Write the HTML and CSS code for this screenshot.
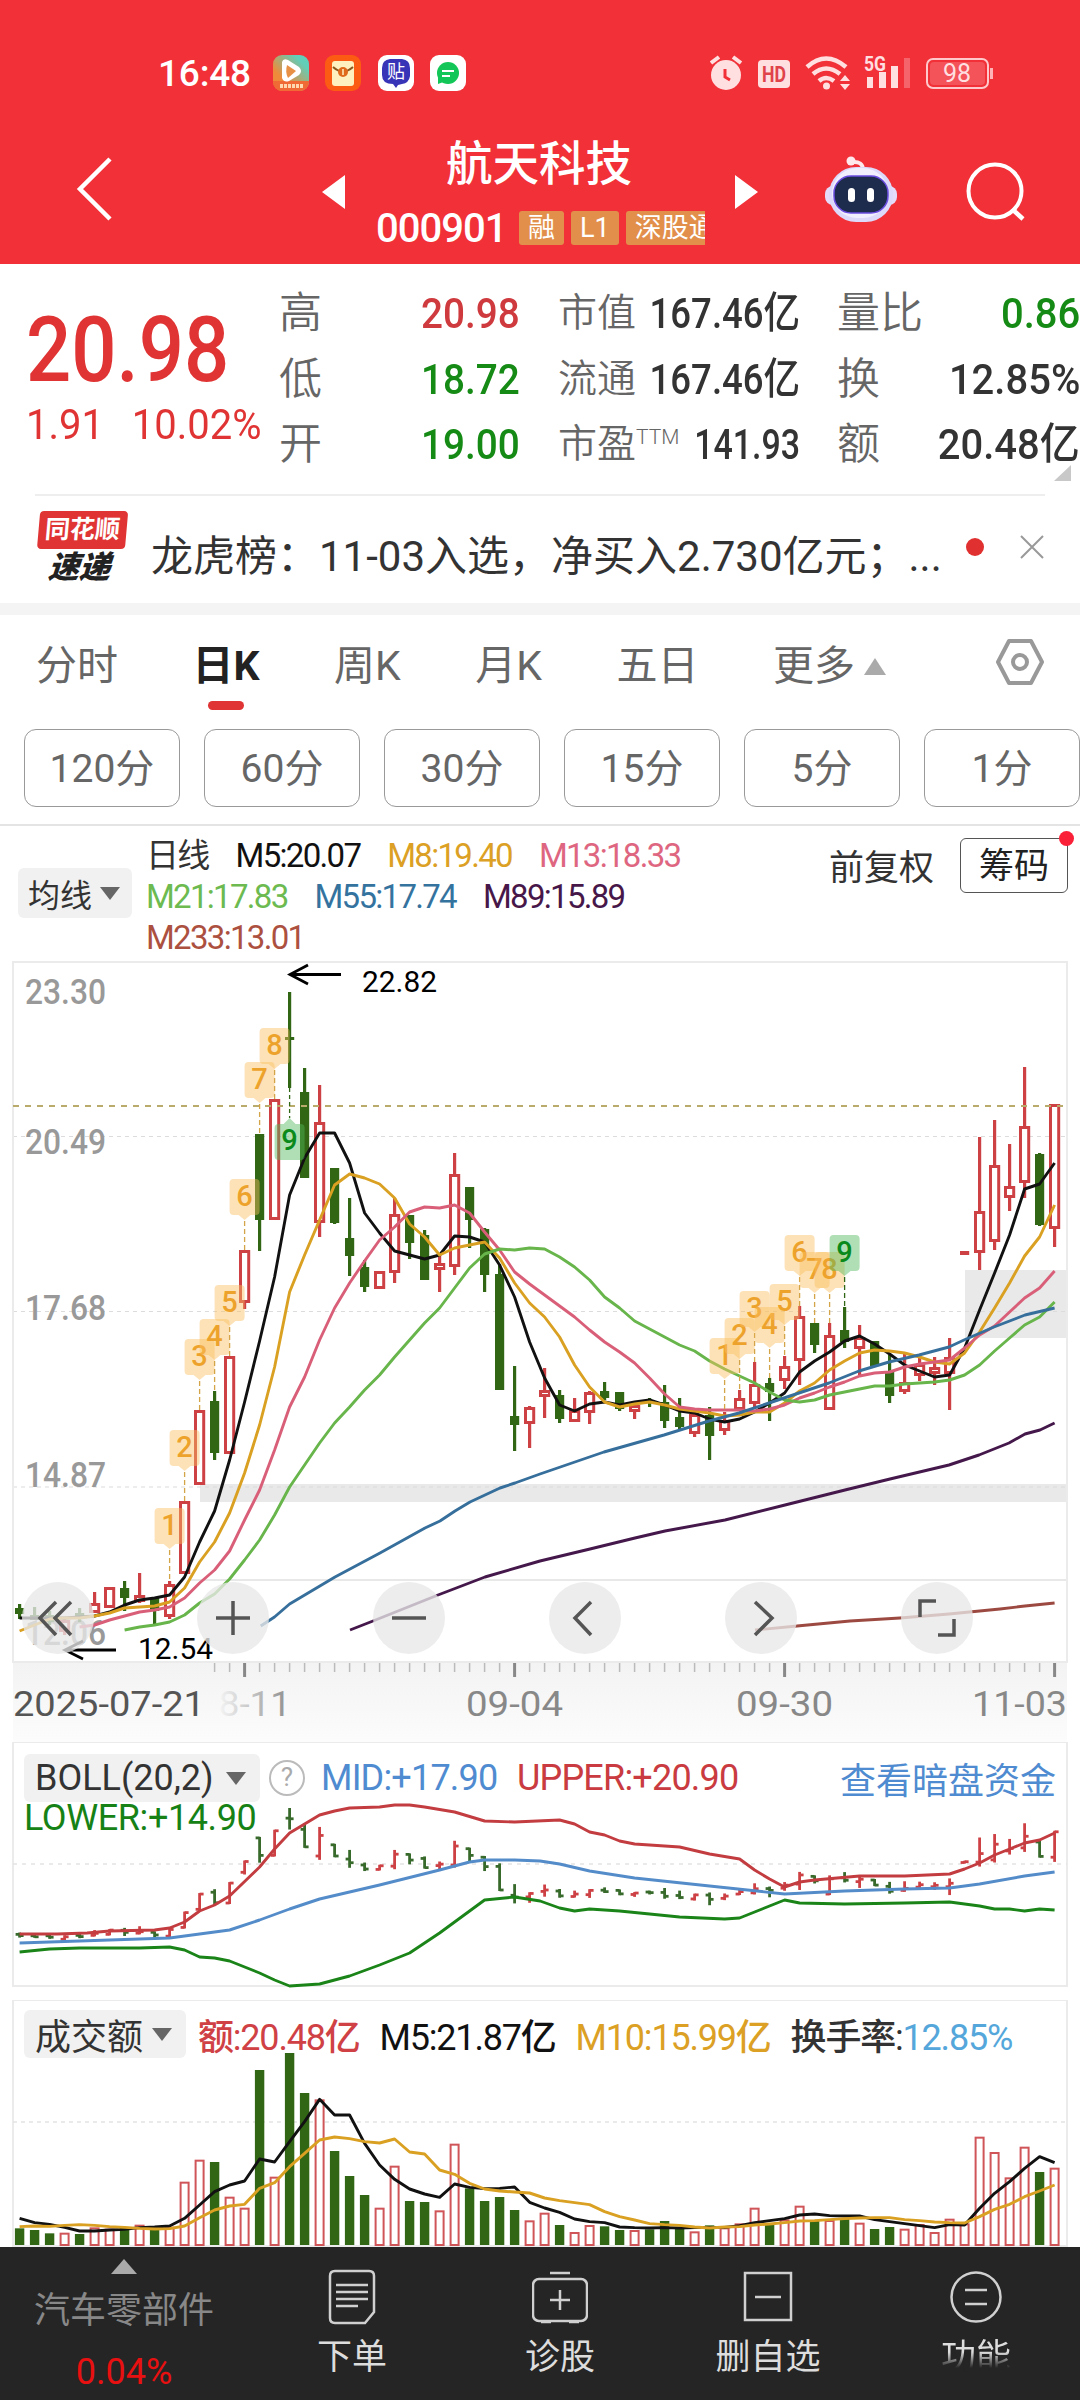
FILE: index.html
```html
<!DOCTYPE html>
<html lang="zh-CN">
<head>
    <meta charset="UTF-8">
    <title>航天科技 000901</title>
    <link rel="stylesheet" href="styles.css">
</head>
<body>
<header class="top">
    <div class="status">
        <span class="clock">16:48</span>
        <svg class="app" viewBox="0 0 36 36">
            <defs><linearGradient id="g1" x1="0" y1="1" x2="1" y2="0"><stop offset="0.3" stop-color="#ee8a3a"/><stop offset="0.8" stop-color="#62cdb8"/></linearGradient></defs>
            <rect width="36" height="36" rx="9" fill="url(#g1)"/>
            <path d="M0 26h36v1a9 9 0 0 1-9 9H9a9 9 0 0 1-9-9z" fill="#ef6a35"/>
            <path d="M9 7q1-4 6-2l11 7q4 4 0 8l-10 6q-5 2-7-3z" fill="#fff"/>
            <path d="M14 10l9 6-8 7q-3-6-1-13z" fill="#e89045"/>
            <path d="M7 31h23" stroke="#ffd9b0" stroke-width="4" stroke-dasharray="3 1"/>
        </svg>
        <svg class="app" viewBox="0 0 36 36">
            <rect width="36" height="36" rx="9" fill="#fb5b12"/>
            <rect x="7" y="6" width="22" height="25" rx="3" fill="#fff0c0"/>
            <path d="M8 12q10 9 20 0" fill="none" stroke="#8a5a20" stroke-width="2"/>
            <circle cx="18" cy="17" r="5" fill="#e06a1c"/><path d="M18 14v6" stroke="#fff0c0" stroke-width="1.5"/>
        </svg>
        <svg class="app" viewBox="0 0 36 36">
            <rect width="36" height="36" rx="9" fill="#fff"/>
            <path d="M12 4h12q8 1 8 9v8q-1 7-8 8l-4 1-2 3-3-4q-11 0-11-9v-7q0-8 8-9z" fill="#3834b8"/>
            <text x="18" y="23" text-anchor="middle" font-size="18" fill="#fff">贴</text>
        </svg>
        <svg class="app" viewBox="0 0 36 36">
            <rect width="36" height="36" rx="9" fill="#fff"/>
            <circle cx="18" cy="18" r="11" fill="#12c657"/><path d="M8 20v9l8-3z" fill="#12c657"/>
            <path d="M12 16h12M12 21h8" stroke="#fff" stroke-width="2"/>
        </svg>
        <svg class="status-icons" viewBox="710 50 290 45">
            <g fill="#ffdfe0">
                <circle cx="726" cy="74" r="15"/>
                <path d="M711 62l8-6M741 62l-8-6" stroke="#ffdfe0" stroke-width="4"/>
                <path d="M725 68v8l5 3" fill="none" stroke="#f13038" stroke-width="3"/>
                <rect x="758" y="59" width="32" height="28" rx="4"/>
                <text x="774" y="81" text-anchor="middle" font-size="22" font-weight="bold" fill="#e0434a" textLength="24" lengthAdjust="spacingAndGlyphs">HD</text>
                <g fill="none" stroke="#ffdfe0" stroke-width="4.5">
                    <path d="M807 66q19-17 39 0M813 73q13-11 27 0M819 80q7-6 15 0"/>
                </g>
                <circle cx="826.500" cy="85" r="3.500"/>
                <path d="M840 80h10l-5-6zM840 83h10l-5 6z"/>
                <text x="864" y="70" font-size="20" font-weight="bold" textLength="22" lengthAdjust="spacingAndGlyphs">5G</text>
                <path d="M867 76h6v11h-6zM879 71h7v16h-7zM891 65h7v22h-7z"/>
                <path d="M904 57h6v30h-6z" opacity="0.3"/>
                <rect x="927" y="58" width="61" height="29" rx="6" fill="none" stroke="#ffc9cb" stroke-width="2"/>
                <rect x="930" y="61" width="55" height="23" rx="4" opacity="0.2"/>
                <path d="M990 67h3v11h-3z" fill="#ffb3b6"/>
                <text x="957" y="81" text-anchor="middle" font-size="25">98</text>
            </g>
        </svg>
    </div>
    <div class="nav">
        <svg class="back" viewBox="0 0 38 66"><path d="M34 3L4 33l30 30" fill="none" stroke="#fff" stroke-width="4.500"/></svg>
        <svg class="prev" viewBox="0 0 23 34"><path d="M23 0v34L0 17z" fill="#fff"/></svg>
        <div class="stock">
            <h1>航天科技</h1>
            <div class="code-row"><span class="code">000901</span><span class="badge">融</span><span class="badge">L1</span><span class="badge">深股通</span></div>
        </div>
        <svg class="next" viewBox="0 0 23 34"><path d="M0 0v34l23-17z" fill="#fff"/></svg>
        <svg class="robot" viewBox="0 0 72 67">
            <path d="M38 14q0-9-11-8" fill="none" stroke="#ffe9ec" stroke-width="4"/>
            <circle cx="26" cy="5" r="4.500" fill="#ffe9ec"/>
            <rect x="0" y="30" width="72" height="19" rx="8" fill="#e5dcfa"/>
            <rect x="4" y="11" width="64" height="55" rx="27" fill="#dcd9fb"/>
            <rect x="7" y="12" width="56" height="50" rx="25" fill="#f1eefe"/>
            <rect x="9" y="20" width="54" height="37" rx="17" fill="#1d2b4d" stroke="#6a4de0" stroke-width="1.500"/>
            <rect x="23" y="32" width="7" height="14" rx="3.500" fill="#fff"/>
            <rect x="42" y="32" width="7" height="14" rx="3.500" fill="#fff"/>
        </svg>
        <svg class="search" viewBox="0 0 62 62"><circle cx="30" cy="30" r="26.500" fill="none" stroke="#fff" stroke-width="4"/><path d="M47 48l11 10" stroke="#fff" stroke-width="4.500"/></svg>
    </div>
</header>

<section class="quote">
    <div class="price">
        <div class="last">20.98</div>
        <div class="change"><span>1.91</span><span>10.02%</span></div>
    </div>
    <dl class="col col-a">
        <dt>高</dt><dd class="up">20.98</dd>
        <dt>低</dt><dd class="down">18.72</dd>
        <dt>开</dt><dd class="down">19.00</dd>
    </dl>
    <dl class="col col-b">
        <dt>市值</dt><dd>167.46亿</dd>
        <dt>流通</dt><dd>167.46亿</dd>
        <dt>市盈<sup>TTM</sup></dt><dd class="pe">141.93</dd>
    </dl>
    <dl class="col col-c">
        <dt>量比</dt><dd class="down">0.86</dd>
        <dt>换</dt><dd>12.85%</dd>
        <dt>额</dt><dd>20.48亿</dd>
    </dl>
    <i class="corner"></i>
</section>

<section class="news">
    <div class="news-logo"><b>同花顺</b><em>速递</em></div>
    <p>龙虎榜：11-03入选，净买入2.730亿元；...</p>
    <i class="dot"></i>
    <svg class="close" viewBox="0 0 24 24"><path d="M1 1l22 22M23 1L1 23" stroke="#999" stroke-width="2"/></svg>
</section>

<nav class="tabs">
    <span>分时</span><span class="active">日K</span><span>周K</span><span>月K</span><span>五日</span><span class="more">更多</span>
    <svg class="hex" viewBox="0 0 50 48"><path d="M14 3h22l11 21-11 21H14L3 24z" fill="none" stroke="#999" stroke-width="4" stroke-linejoin="round"/><circle cx="25" cy="24" r="7" fill="none" stroke="#999" stroke-width="4"/></svg>
</nav>
<div class="minutes">
    <span>120分</span><span>60分</span><span>30分</span><span>15分</span><span>5分</span><span>1分</span>
</div>

<section class="ma">
    <span class="select ma-select">均线</span>
    <div class="ma-rows">
        <div><span class="kind">日线</span><span class="m5">M5:20.07</span><span class="m8">M8:19.40</span><span class="m13">M13:18.33</span></div>
        <div><span class="m21">M21:17.83</span><span class="m55">M55:17.74</span><span class="m89">M89:15.89</span></div>
        <div><span class="m233">M233:13.01</span></div>
    </div>
    <span class="fq">前复权</span>
    <span class="chips">筹码</span>
</section>

<svg id="kline" width="1080" height="782" viewBox="0 960 1080 782"></svg>

<section class="panel">
    <svg id="boll" width="1080" height="258" viewBox="0 1742 1080 258"></svg>
    <div class="legend">
        <span class="select">BOLL(20,2)</span>
        <span class="help">?</span>
        <span class="mid">MID:+17.90</span>
        <span class="upper">UPPER:+20.90</span>
        <span class="link">查看暗盘资金</span>
    </div>
    <div class="lower">LOWER:+14.90</div>
</section>

<section class="panel">
    <svg id="volume" width="1080" height="247" viewBox="0 2000 1080 247"></svg>
    <div class="legend vol-legend">
        <span class="select">成交额</span>
        <span class="amount">额:20.48亿</span>
        <span class="m5">M5:21.87亿</span>
        <span class="m8">M10:15.99亿</span>
        <span>换手率:<b>12.85%</b></span>
    </div>
</section>

<footer class="bottom">
    <div class="sector"><i></i><span>汽车零部件</span><b>0.04%</b></div>
    <div class="item">
        <svg viewBox="0 0 56 56"><path d="M11 2h34q5 0 5 5v36l-9 11H11q-5 0-5-5V7q0-5 5-5z"/><path d="M12 16h32M12 23h32M12 30h32M12 37h22"/></svg>
        <span>下单</span>
    </div>
    <div class="item">
        <svg viewBox="0 0 56 56"><rect x="1" y="10" width="54" height="42" rx="6"/><path d="M18 4h20M28 21v20M18 31h20M9 53h10M37 53h10"/></svg>
        <span>诊股</span>
    </div>
    <div class="item">
        <svg viewBox="0 0 56 56"><rect x="5" y="4" width="46" height="47"/><path d="M15 28h26"/></svg>
        <span>删自选</span>
    </div>
    <div class="item last-item">
        <svg viewBox="0 0 56 56"><circle cx="28" cy="28" r="24.500"/><path d="M17 21h22M17 35h22"/></svg>
        <span>功能</span>
    </div>
</footer>

<script src="chart.js"></script>
</body>
</html>
```
FILE: styles.css
```css
* {
    box-sizing: border-box;
}

body {
    margin: 0;
    width: 1080px;
    height: 2400px;
    overflow: hidden;
    background: #fff;
    color: #333;
    font-family: Roboto, "Noto Sans CJK SC", sans-serif;
}

svg {
    display: block;
    flex: none;
}

span, dt, dd, p {
    white-space: nowrap;
}

/* red header */
.top {
    height: 264px;
    background: #f13038;
    color: #fff;
}

.status {
    display: flex;
    align-items: center;
    height: 126px;
    padding: 20px 0 0 158px;
}

.clock {
    width: 115px;
    font-size: 37px;
    font-weight: 500;
    letter-spacing: -0.2px;
}

.app {
    width: 36px;
    height: 36px;
    margin-right: 16.400px;
}

.status-icons {
    width: 290px;
    height: 45px;
    margin-left: 227px;
}

.nav {
    display: flex;
    height: 138px;
}

.back {
    width: 38px;
    height: 66px;
    margin: 30px 0 0 76px;
}

.prev, .next {
    width: 23px;
    height: 34px;
    margin-top: 49px;
}

.prev {
    margin-left: 208px;
}

.stock {
    width: 329px;
    margin: 9px 30px 0 31px;
    overflow: hidden;
}

h1 {
    margin: 0 0 0 70px;
    font-size: 46.500px;
    font-weight: 500;
    line-height: 58px;
}

.code-row {
    display: flex;
    align-items: center;
    gap: 7px;
    height: 36px;
    margin-top: 17px;
}

.code {
    flex: none;
    width: 136px;
    font-size: 40px;
    font-weight: 500;
    letter-spacing: -1px;
}

.badge {
    flex: none;
    padding: 0 9px;
    border-radius: 3px;
    background: #e28f4b;
    font-size: 27px;
    line-height: 34px;
}

.robot {
    width: 72px;
    height: 67px;
    margin: 30px 0 0 67px;
}

.search {
    width: 62px;
    height: 62px;
    margin: 35px 0 0 68px;
}

/* quote */
.quote {
    display: flex;
    position: relative;
    width: 1080px;
    height: 232px;
}

.quote::after {
    content: "";
    position: absolute;
    left: 35px;
    right: 35px;
    bottom: 0;
    height: 2px;
    background: #eee;
}

.price {
    flex: none;
    width: 279px;
    padding: 37px 0 0 26px;
    color: #e03434;
}

.last {
    font-size: 91px;
    font-weight: 500;
    line-height: 99px;
    transform: scaleX(0.875);
    transform-origin: left;
}

.change {
    display: flex;
    gap: 30px;
    width: 280px;
    font-size: 43px;
    line-height: 48px;
    transform: scaleX(0.93);
    transform-origin: left;
}

.col {
    display: grid;
    flex: none;
    grid-template-columns: 40px 1fr;
    grid-auto-rows: 65.500px;
    align-items: center;
    margin: 17px 0 0;
}

.col-a {
    width: 241px;
}

.col-a dd {
    transform: scaleX(0.9);
}

.col-b {
    width: 242px;
    margin-left: 38px;
}

.col-b dt {
    font-size: 39px;
}

.col-c {
    width: 243px;
    margin-left: 37px;
}

dt {
    color: #666;
    font-size: 43px;
    font-weight: 350;
    line-height: 65px;
}

dt sup {
    font-size: 21px;
    line-height: 0;
    vertical-align: 13px;
}

dd {
    justify-self: end;
    margin: 0;
    font-size: 43px;
    font-weight: 500;
    line-height: 65px;
    transform: scaleX(0.85);
    transform-origin: right;
}

.col-b .pe {
    transform: scaleX(0.79);
}

.col-c dd {
    transform: scaleX(0.93);
}

.up {
    color: #cf3a3e;
}

.down {
    color: #158a15;
}

.corner {
    position: absolute;
    left: 1054px;
    top: 201px;
    border-left: 17px solid transparent;
    border-bottom: 16px solid #c8c8c8;
}

.news {
    display: flex;
    align-items: center;
    height: 119px;
    padding: 3px 0 0 37px;
    border-bottom: 12px solid #f4f4f4;
}

.news-logo {
    width: 88px;
    height: 74px;
    margin-right: 26px;
    margin-top: -7px;
    text-align: center;
    transform: skewX(-5deg);
}

.news-logo b {
    display: block;
    border-radius: 4px;
    background: #e03434;
    color: #fff;
    font-size: 25px;
    line-height: 38px;
}

.news-logo em {
    display: block;
    color: #222;
    font-size: 31px;
    font-weight: 900;
    line-height: 38px;
}

.news p {
    width: 815px;
    margin: 3px 0 0;
    font-size: 42px;
}

.dot {
    width: 18px;
    height: 18px;
    margin-top: -8px;
    border-radius: 50%;
    background: #e03030;
}

.close {
    width: 24px;
    height: 24px;
    margin: -8px 0 0 36px;
}

/* period tabs */
.tabs {
    display: flex;
    align-items: center;
    position: relative;
    height: 114px;
    padding: 0 0 20px 36px;
    color: #666;
    font-size: 41px;
}

.tabs span {
    margin-right: 74.500px;
}

.tabs .active {
    position: relative;
    color: #222;
    font-weight: bold;
}

.active::after {
    content: "";
    position: absolute;
    left: 15px;
    top: 69px;
    width: 36px;
    height: 9px;
    border-radius: 5px;
    background: #e03434;
}

.tabs .more {
    margin-right: 109px;
}

.more::after {
    content: "";
    display: inline-block;
    margin-left: 9px;
    border: 11px solid transparent;
    border-top: 0;
    border-bottom: 17px solid #aaa;
    vertical-align: 5px;
}

.hex {
    width: 50px;
    height: 48px;
}

.minutes {
    display: flex;
    gap: 24px;
    height: 97px;
    padding-left: 24px;
    border-bottom: 2px solid #e4e4e4;
}

.minutes span {
    flex: none;
    width: 156px;
    height: 78px;
    border: 1.500px solid #999;
    border-radius: 12px;
    color: #666;
    font-size: 39px;
    line-height: 79px;
    text-align: center;
}

/* moving average header */
.ma {
    display: flex;
    height: 134px;
    padding-left: 18px;
}

.select {
    display: flex;
    flex: none;
    align-items: center;
    border-radius: 6px;
    background: #f1f1f1;
    color: #333;
}

.select::after {
    content: "";
    margin-left: 8px;
    border: 10px solid transparent;
    border-bottom: 0;
    border-top: 13px solid #666;
}

.ma-select {
    width: 114px;
    height: 50px;
    margin-top: 42px;
    padding-left: 10px;
    font-size: 32px;
}

.ma-rows {
    width: 683px;
    margin-left: 14px;
    padding-top: 9px;
    font-size: 33px;
    font-weight: 450;
    line-height: 41px;
    letter-spacing: -1.700px;
}

.ma-rows div {
    display: flex;
    gap: 27px;
    height: 41px;
}

.kind {
    font-weight: 400;
}

.m5 {
    color: #111;
}

.m8 {
    color: #dba024;
}

.m13 {
    color: #de6680;
}

.m21 {
    color: #6cba50;
}

.m55 {
    color: #35739f;
}

.m89 {
    color: #471749;
}

.m233 {
    color: #ac503f;
}

.fq {
    width: 131px;
    margin-top: 17px;
    font-size: 35px;
    line-height: 52px;
}

.chips {
    position: relative;
    width: 108px;
    height: 55px;
    margin-top: 12px;
    border: 1.500px solid #555;
    border-radius: 6px;
    color: #222;
    font-size: 35px;
    line-height: 56px;
    text-align: center;
}

.chips::after {
    content: "";
    position: absolute;
    right: -7px;
    top: -8px;
    width: 15px;
    height: 15px;
    border-radius: 50%;
    background: #fa2038;
}

/* indicator panels */
.panel {
    position: relative;
}

.legend {
    position: absolute;
    left: 24px;
    top: 12px;
    display: flex;
    align-items: center;
    width: 1040px;
    height: 48px;
    font-size: 36px;
}

.legend .select {
    width: 236px;
    height: 48px;
    padding-left: 11px;
}

.legend .select::after {
    margin-left: auto;
    margin-right: 14px;
}

.help {
    width: 36px;
    height: 36px;
    margin-left: 9px;
    border: 2.500px solid #bbb;
    border-radius: 50%;
    color: #aaa;
    font-size: 26px;
    line-height: 31px;
    text-align: center;
}

.mid {
    width: 196px;
    margin-left: 16px;
    color: #4f8bd0;
    font-weight: 450;
    letter-spacing: -0.8px;
}

.upper {
    color: #c93b40;
    font-weight: 450;
    letter-spacing: -0.8px;
}

.link {
    margin-left: auto;
    margin-right: 8px;
    color: #4f8bd0;
}

.lower {
    position: absolute;
    left: 24px;
    top: 55px;
    color: #168216;
    font-size: 36px;
    font-weight: 450;
    letter-spacing: -0.400px;
}

.vol-legend {
    top: 10px;
    gap: 20px;
    font-weight: 450;
    letter-spacing: -1.200px;
}

.vol-legend .select {
    width: 162px;
    margin-right: -8px;
    font-weight: 400;
    letter-spacing: 0;
}

.amount {
    color: #cf4145;
}

.vol-legend b {
    color: #55a7db;
    font-weight: 450;
}

/* bottom bar */
.bottom {
    display: flex;
    height: 153px;
    background: #252525;
}

.sector {
    display: flex;
    flex-direction: column;
    align-items: center;
    width: 248px;
    padding-top: 12px;
}

.sector i {
    border: 13px solid transparent;
    border-top: 0;
    border-bottom: 15px solid #aaa;
}

.sector span {
    margin-top: 10px;
    color: #888;
    font-size: 36px;
    line-height: 54px;
}

.sector b {
    margin-top: 9px;
    color: #e81010;
    font-size: 36px;
    font-weight: 400;
    line-height: 50px;
}

.item {
    display: flex;
    flex-direction: column;
    align-items: center;
    width: 208px;
    padding-top: 22px;
    color: #ddd;
    font-size: 35px;
    line-height: 52px;
}

.item svg {
    width: 56px;
    height: 56px;
    margin-bottom: 7px;
    fill: none;
    stroke: #d0d0d0;
    stroke-width: 2.500px;
}

/* label fades out into the bar */
.last-item span {
    background: linear-gradient(#ddd 20px, #252525 36px);
    background-clip: text;
    -webkit-background-clip: text;
    color: transparent;
}
```
FILE: chart.js
```js
const STEP = 15;
const X0 = 19.6;
const RED = '#cd4145';
const GREEN = '#316714';
const x = i => X0 + i * STEP;

// [high, low, body top, body bottom, up]
const candles = [
    [1604,1619,1608,1614,0],[1607,1620,1615,1620,0],[1611,1625,1615,1622,0],[1617,1635,1620,1632,1],[1608,1622,1613,1619,0],
    [1592,1613,1603,1613,1],[1587,1608,1587,1608,1],[1581,1611,1588,1598,0],[1573,1603,1595,1602,1],[1598,1624,1598,1611,0],
    [1581,1619,1584,1617,1],[1501,1574,1501,1574,1],[1410,1485,1410,1485,1],[1391,1460,1401,1453,0],[1356,1454,1356,1454,1],
    [1250,1309,1250,1303,1],[1134,1251,1134,1220,0],[1099,1220,1099,1220,1],[992,1088,1037,1040,0],[1068,1178,1092,1178,0],
    [1085,1237,1122,1223,1],[1168,1224,1168,1223,0],[1198,1276,1238,1256,0],[1260,1292,1267,1287,0],[1271,1289,1271,1289,1],
    [1198,1283,1214,1273,1],[1215,1259,1215,1243,0],[1230,1280,1235,1280,0],[1255,1292,1263,1270,1],[1153,1275,1174,1267,1],
    [1187,1248,1187,1220,0],[1228,1292,1229,1275,0],[1264,1390,1274,1390,0],[1366,1451,1416,1425,0],[1406,1448,1407,1424,1],
    [1368,1418,1390,1397,1],[1390,1423,1395,1419,0],[1398,1422,1410,1422,1],[1391,1424,1392,1413,1],[1382,1400,1391,1398,0],
    [1392,1411,1392,1409,0],[1405,1419,1405,1412,1],[1398,1407,1400,1403,0],[1385,1428,1402,1421,0],[1398,1430,1417,1427,0],
    [1413,1437,1414,1434,1],[1407,1460,1415,1436,0],[1412,1435,1420,1431,1],[1390,1410,1398,1410,1],[1362,1407,1384,1404,1],
    [1378,1421,1383,1392,0],[1356,1389,1366,1381,1],[1306,1385,1316,1361,1],[1323,1353,1323,1345,0],[1323,1410,1335,1410,1],
    [1307,1348,1330,1342,0],[1325,1375,1337,1349,1],[1341,1366,1341,1366,0],[1355,1403,1372,1396,0],[1352,1394,1382,1392,1],
    [1354,1381,1364,1376,1],[1357,1385,1367,1374,1],[1338,1410,1357,1374,1],[1251,1255,1251,1255,1],[1137,1270,1211,1253,1],
    [1120,1250,1165,1242,1],[1144,1211,1186,1198,1],[1067,1198,1126,1183,1],[1153,1226,1154,1225,0],[1104,1247,1104,1229,1]
];

const m5 = [1618,1618,1618,1618,1617,1616,1612,1605,1600,1598,1595,1577,1542,1511,1460,1402,1341,1277,1195,1158,1133,1133,1163,1213,1233,1251,1255,1259,1255,1236,1237,1242,1265,1297,1342,1378,1405,1411,1404,1402,1405,1402,1400,1405,1411,1413,1419,1422,1419,1412,1403,1393,1372,1361,1352,1341,1336,1344,1354,1365,1371,1377,1375,1348,1310,1273,1235,1189,1184,1163];
const m8 = [1631,1625,1619,1618,1618,1616,1613,1608,1607,1606,1602,1588,1562,1542,1513,1473,1425,1367,1292,1255,1220,1185,1174,1178,1184,1198,1224,1237,1255,1248,1245,1242,1258,1283,1303,1317,1337,1365,1387,1402,1407,1404,1402,1405,1409,1411,1413,1416,1415,1412,1412,1403,1391,1383,1370,1361,1353,1350,1351,1353,1357,1362,1364,1353,1332,1308,1283,1256,1237,1205];
const m13 = [1627,1625,1620,1616,1612,1610,1607,1598,1583,1570,1551,1520,1490,1450,1407,1377,1340,1308,1283,1261,1240,1227,1212,1207,1208,1205,1213,1232,1250,1272,1284,1295,1306,1317,1330,1342,1352,1363,1378,1394,1407,1409,1410,1410,1410,1411,1409,1405,1398,1393,1387,1382,1376,1373,1372,1367,1364,1362,1360,1348,1335,1326,1312,1298,1288,1271];
const m21 = [1630,1627,1625,1622,1615,1603,1594,1579,1560,1540,1515,1487,1465,1443,1423,1407,1390,1375,1357,1340,1323,1308,1288,1268,1254,1249,1250,1248,1249,1257,1267,1280,1297,1308,1321,1329,1337,1345,1351,1361,1369,1376,1383,1392,1400,1402,1400,1395,1392,1389,1386,1386,1384,1383,1382,1380,1375,1365,1351,1338,1325,1317,1302];
const m55 = '260.7,1626 274.5,1617 289.6,1604 335,1577 380,1553 425,1528 440,1521 455,1511 470,1502 500,1488 515,1483 540,1474 604,1452 664,1435 709,1421 739,1413 769,1403 799,1393 829,1383 859,1371 889,1362 919,1355 949,1347 964,1340 994,1327 1025,1315 1054.6,1308';
const m89 = '350,1630 373,1621 438,1595 485,1577 540,1561 590,1549 635,1538 665,1531 725,1520 785,1505 845,1490 890,1479 949,1465 979,1455 1009,1443 1025,1434 1040,1430 1054.6,1423';
const m233 = '755,1630 797,1626 850,1621 900,1618 949,1614 1000,1609 1025,1606 1054.6,1603';

const line = (pts, color, w = 2.9) => `<polyline points="${pts}" fill="none" stroke="${color}" stroke-width="${w}" stroke-linejoin="round"/>`;
const series = (arr, start = 0) => arr.map((v, i) => `${x(i + start)},${v}`).join(' ');
const sparse = arr => arr.map(([i, v]) => `${x(i)},${v}`).join(' ');
const seg = (x1, y1, x2, y2, color, w, dash = '') => `<line x1="${x1}" y1="${y1}" x2="${x2}" y2="${y2}" stroke="${color}" stroke-width="${w}" stroke-dasharray="${dash}"/>`;
const label = (s, lx, y, w, size, color, extra = '') => `<text x="${lx}" y="${y}" font-size="${size}" fill="${color}" textLength="${w}" lengthAdjust="spacingAndGlyphs" ${extra}>${s}</text>`;
const frame = (y, h) => `<rect x="13" y="${y}" width="1054" height="${h}" fill="none" stroke="#ebebeb" stroke-width="2"/>`;

function drawKline() {
    let s = `<defs><linearGradient id="axis" x1="0" y1="0" x2="0" y2="1"><stop offset="0" stop-color="#f3f3f3"/><stop offset="1" stop-color="#fcfcfc"/></linearGradient>
        <linearGradient id="fade"><stop offset="0.2" stop-color="#999" stop-opacity="0"/><stop offset="0.9" stop-color="#999"/></linearGradient></defs>`;
    s += `<rect x="13" y="1663" width="1054" height="79" fill="url(#axis)"/>`;
    s += '<rect x="200" y="1484" width="867" height="18" fill="#e9e9e9"/><rect x="965" y="1270" width="102" height="68" fill="#e9e9e9"/>';
    [1136.5, 1311.5, 1487].forEach(y => s += seg(13, y, 1067, y, '#dcdcdc', 1.2, '4 4'));
    s += seg(190, 1580, 1067, 1580, '#e8e8e8', 2) + frame(962, 700);
    [['23.30', 1004], ['20.49', 1154], ['17.68', 1320], ['14.87', 1487], ['12.06', 1645]].forEach(([t, y]) => s += label(t, 25, y, 81, 35, '#999', 'font-weight="500"'));

    candles.forEach(([hi, lo, top, bot, up], i) => {
        const c = up ? RED : GREEN;
        if (hi < top) s += seg(x(i), hi, x(i), top, c, 3.2);
        if (lo > bot) s += seg(x(i), bot, x(i), lo, c, 3.2);
        if (up && bot - top > 5) s += `<rect x="${x(i) - 4.1}" y="${top + 1.5}" width="8.2" height="${bot - top - 3}" fill="#fff" stroke="${c}" stroke-width="3"/>`;
        else s += `<rect x="${x(i) - 4.6}" y="${top}" width="9.2" height="${bot - top}" fill="${c}"/>`;
    });

    s += seg(13, 1106, 1067, 1106, '#b8ab6c', 2, '6 6');
    s += line(series(m5), '#111') + line(series(m8), '#d9a022') + line(series(m13, 4), '#d95f79') + line(series(m21, 7), '#67b54b');
    s += line(m55, '#366f9b') + line(m89, '#45184b') + line(m233, '#9c4a41');

    // sequence counters above the candles
    const tops = { 10: 1508, 11: 1430, 12: 1339, 13: 1319, 14: 1285, 15: 1179, 16: 1062, 17: 1028, 47: 1338, 48: 1318, 49: 1291, 50: 1307, 51: 1284, 52: 1235, 53: 1252, 54: 1252, 55: 1235 };
    Object.entries(tops).forEach(([k, t]) => {
        const i = +k, cx = x(i), n = i < 20 ? i - 9 : i - 46, g = n === 9;
        s += seg(cx, t + 42, cx, candles[i][0], g ? '#316714' : '#d3a548', 1.3, '5 3');
        s += `<path d="M${cx - 11} ${t}h22q4 0 4 4v28q0 4-4 4h-5l-6 5-6-5h-5q-4 0-4-4v-28q0-4 4-4z" fill="${g ? '#4fb95a' : '#fbbf60'}" fill-opacity="0.45"/>`;
        s += `<text x="${cx}" y="${t + 27}" text-anchor="middle" font-size="29" font-weight="500" fill="${g ? '#0a8a1a' : '#eda22c'}">${n}</text>`;
    });
    s += seg(x(18), 1088, x(18), 1118, '#316714', 1.3, '4 3');
    s += `<path d="M${x(18) - 11} 1124h5l6-6 6 6h5q4 0 4 4v28q0 4-4 4h-22q-4 0-4-4v-28q0-4 4-4z" fill="#4fb95a" fill-opacity="0.45"/><text x="${x(18)}" y="1150" text-anchor="middle" font-size="29" font-weight="500" fill="#0a8a1a">9</text>`;

    s += '<g fill="none" stroke="#000" stroke-width="2.8"><path d="M341 974.500H290M308 965l-18 9.500 18 9.500"/><path d="M116 1650H65M83 1641l-18 9 18 9"/></g>';
    s += label('22.82', 362, 992, 75, 29, '#000') + label('12.54', 138, 1659, 75, 29, '#000');

    [58, 233, 409, 585, 761, 937].forEach(cx => s += `<circle cx="${cx}" cy="1618" r="36" fill="#e8e8e8" fill-opacity="0.78"/>`);
    s += `<g fill="none" stroke="#555" stroke-width="3.5"><path d="M56 1602l-16 16 16 17M71 1602l-16 16 16 17"/><path d="M216 1618h34M233 1601v34M392 1618h34"/>
        <path d="M591 1602l-16 16 16 17M755 1602l17 16-17 17"/><path d="M920 1617v-16h16M938 1635h16v-16"/></g>`;

    for (let i = 13; i < 70; i++) {
        const major = (i - 15) % 18 === 0;
        s += seg(x(i), 1663, x(i), major ? 1677 : 1672, major ? '#888' : '#bbb', major ? 3 : 1.5);
    }
    s += label('2025-07-21', 13, 1716, 192, 35, '#555', 'font-weight="450"') + label('08-11', 198, 1716, 93, 35, 'url(#fade)', 'font-weight="450"');
    s += label('09-04', 466, 1716, 97, 35, '#888', 'font-weight="450"') + label('09-30', 736, 1716, 97, 35, '#888', 'font-weight="450"') + label('11-03', 972, 1716, 95, 35, '#888', 'font-weight="450"');
    document.getElementById('kline').innerHTML = s;
}

function drawBoll() {
    const upper = [[0,1934],[2.5,1934],[4.5,1933],[6,1931],[9,1930],[10,1928],[11,1922],[12,1911],[13,1905],[14,1896],[16,1867],[17,1849],[18,1833],[20,1815],[21,1811],[22,1808],[24,1807],[25,1805],[26,1805],[27,1807],[29,1812],[31,1821],[33,1822],[36,1820],[37,1824],[38,1832],[39,1835],[40,1841],[41,1844],[44,1847],[46,1854],[48,1859],[49,1870],[50,1879],[51,1887],[52,1882],[53,1880],[56,1876],[59,1876],[62,1874],[63,1869],[64,1863],[65,1855],[66,1849],[67,1843],[68,1840],[69,1833]];
    const mid = [[0,1943],[6,1940],[10,1938],[11,1936],[14,1930],[16,1920],[18,1909],[20,1899],[24,1885],[28,1870],[30,1862],[31,1860],[33,1860],[34.7,1861],[36,1864],[38,1871],[41,1878],[46,1886],[51,1894],[55,1891],[59,1889],[62,1888],[64,1884],[67,1876],[69,1872]];
    const lower = [[0,1952],[2,1949],[4,1948],[8,1948],[10,1947],[11,1950],[12,1957],[13,1958],[14,1961],[16,1973],[17,1980],[18,1986],[20,1984],[22,1976],[24,1965],[26,1953],[28,1933],[30,1911],[31,1900],[33,1897],[34.7,1901],[36,1908],[37,1911],[38,1909],[40,1911],[42,1914],[44,1917],[47,1919],[48,1918],[51,1900],[52,1903],[55,1904],[59,1903],[62,1902],[64,1906],[65,1909],[66,1909],[67,1911],[68,1909],[69,1910]];
    const y = v => 1809 + (v - 992) * 0.2035;
    let s = frame(1742, 244) + seg(13, 1864, 1067, 1864, '#e4e4e4', 1.5, '4 5');
    candles.forEach(([hi, lo, top, bot, up], i) => {
        const c = up ? '#cd4145' : '#386a2c';
        const open = y(up ? bot : top), close = y(up ? top : bot);
        s += seg(x(i), y(hi) - 1, x(i), y(lo) + 1, c, 2.8) + seg(x(i) - 4, open, x(i), open, c, 2.8) + seg(x(i), close, x(i) + 4, close, c, 2.8);
    });
    s += line(sparse(upper), '#c23c40') + line(sparse(mid), '#548cc9') + line(sparse(lower), '#1a8419');
    document.getElementById('boll').innerHTML = s;
}

function drawVolume() {
    const bars = [715,720,730,728,732,712,716,712,704,715,710,575,509,516,620,653,240,560,189,309,328,483,558,615,653,527,633,636,661,461,595,633,621,660,691,668,705,726,705,709,720,720,718,693,712,724,706,712,700,653,702,688,647,690,690,685,698,717,711,716,702,726,686,700,440,486,562,470,546,533];
    const v5 = [685,698,703,712,723,723,720,718,713,711,708,685,645,605,585,573,507,516,455,395,328,375,375,460,525,568,597,612,622,582,592,596,595,591,637,654,667,687,695,698,711,713,714,713,714,713,712,712,707,698,692,686,675,672,677,678,678,689,695,701,707,713,704,705,655,610,575,535,500,518];
    const v10 = [710,708,709,706,704,706,710,712,715,717,716,708,683,660,648,643,595,578,530,490,450,441,446,455,459,447,486,492,540,553,580,597,603,606,609,624,632,638,644,665,680,690,701,704,706,711,714,711,710,705,702,698,693,692,689,686,684,683,683,689,692,696,698,699,680,658,643,620,603,585];
    const y = v => 1990 + v / 3;
    const base = 2245;
    let s = frame(2000, 246) + seg(13, 2122, 1067, 2122, '#e4e4e4', 1.5, '4 4');
    bars.forEach((v, i) => {
        const t = y(v);
        if (candles[i][4]) s += `<rect x="${x(i) - 4}" y="${t + 1}" width="8" height="${base - t - 1}" fill="#fff" stroke="#cf5559" stroke-width="2"/>`;
        else s += `<rect x="${x(i) - 4.7}" y="${t}" width="9.400" height="${base - t}" fill="${GREEN}"/>`;
    });
    s += line(series(v5.map(y)), '#111') + line(series(v10.map(y)), '#d9a022');
    document.getElementById('volume').innerHTML = s;
}

drawKline();
drawBoll();
drawVolume();
```
